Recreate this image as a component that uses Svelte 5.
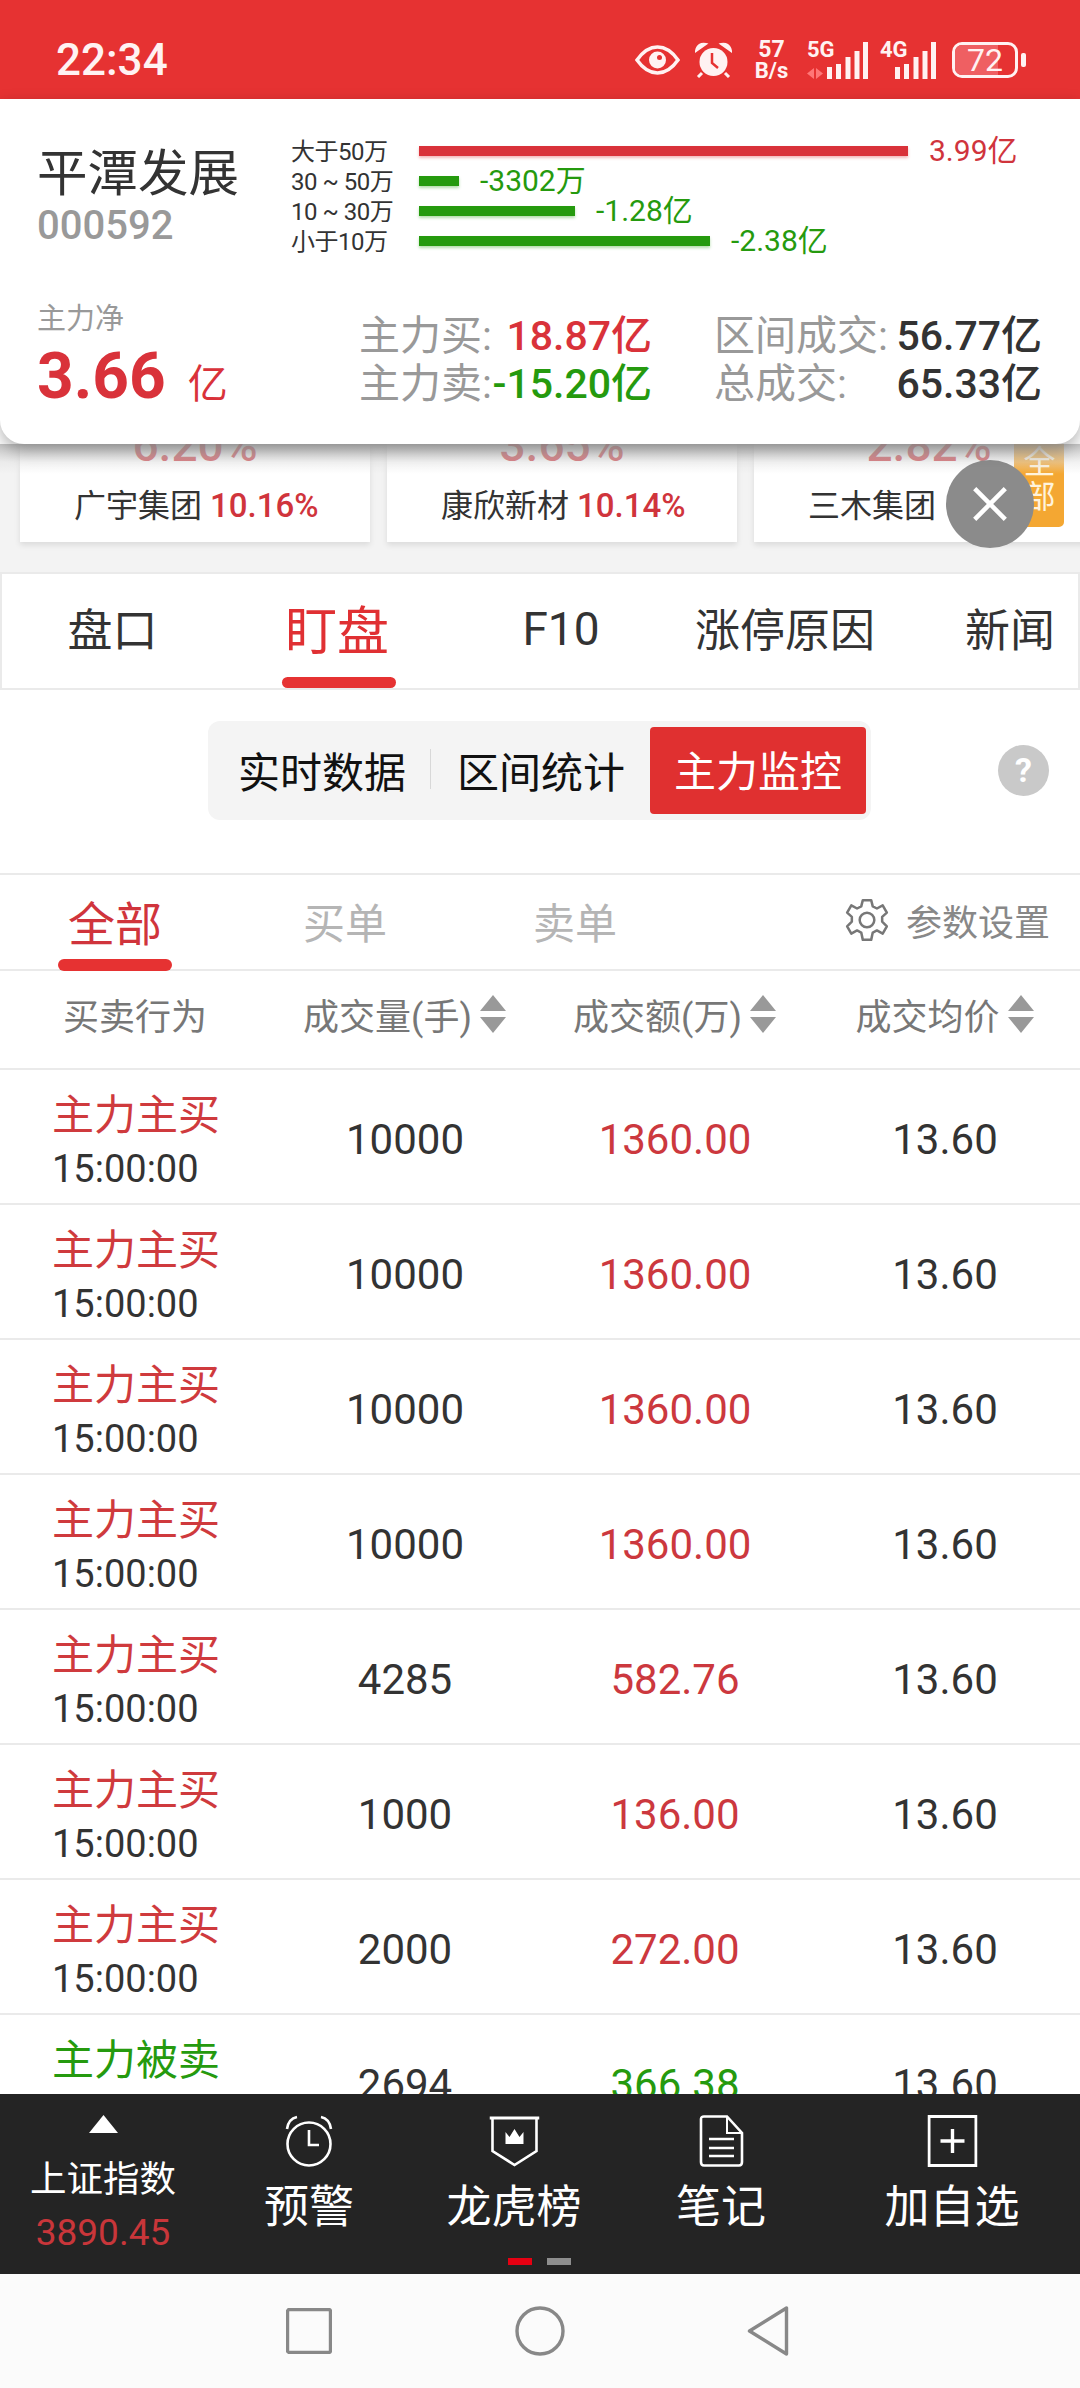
<script>
  const splits = [
    { label: '大于50万', width: 489, value: '3.99亿', up: true },
    { label: '30 ~ 50万', width: 40, value: '-3302万', up: false },
    { label: '10 ~ 30万', width: 156, value: '-1.28亿', up: false },
    { label: '小于10万', width: 291, value: '-2.38亿', up: false }
  ];
  const picks = [
    { pct: '6.20%', name: '广宇集团', rise: '10.16%' },
    { pct: '3.65%', name: '康欣新材', rise: '10.14%' },
    { pct: '2.82%', name: '三木集团', rise: '' }
  ];
  const tabs = [
    { label: '盘口', w: 221 },
    { label: '盯盘', w: 228, on: true },
    { label: 'F10', w: 220 },
    { label: '涨停原因', w: 228 },
    { label: '新闻', w: 222 }
  ];
  const cols = ['成交量(手)', '成交额(万)', '成交均价'];
  const rows = [
    ['主力主买', '10000', '1360.00'],
    ['主力主买', '10000', '1360.00'],
    ['主力主买', '10000', '1360.00'],
    ['主力主买', '10000', '1360.00'],
    ['主力主买', '4285', '582.76'],
    ['主力主买', '1000', '136.00'],
    ['主力主买', '2000', '272.00'],
    ['主力被卖', '2694', '366.38']
  ];
</script>

<div class="screen">
  <header class="status">
    <span class="clock">22:34</span>
    <div class="sys">
      <svg class="eye" viewBox="0 0 45 30" width="45" height="30">
        <path d="M2 15C9 5 15 2 22.500 2S36 5 43 15C36 25 30 28 22.500 28S9 25 2 15Z" fill="none" stroke="#fff2f2" stroke-width="3.500" />
        <circle cx="22.500" cy="15" r="8.500" fill="#fff2f2" />
        <circle cx="24.500" cy="12.500" r="2.500" fill="#e63232" />
      </svg>
      <svg class="alarm" viewBox="0 0 37 36" width="37" height="36">
        <circle cx="18.500" cy="20" r="14" fill="#fff2f2" />
        <path d="M1 9C2 3 6 1 11 2ZM36 9C35 3 31 1 26 2Z" fill="#fff2f2" stroke="#fff2f2" stroke-width="2" />
        <path d="M7 31L3 35M30 31L34 35" stroke="#fff2f2" stroke-width="3" />
        <path d="M17 11V21L23 26" fill="none" stroke="#e63232" stroke-width="2.500" />
      </svg>
      <div class="speed"><span>57</span><span class="unit">B/s</span></div>
      <div class="net">
        <span class="gen">5G</span>
        <svg viewBox="0 0 61 37" width="61" height="37">
          <path d="M0 31.500L7 26V37ZM16 31.500L9 26V37Z" fill="#f77" />
          <path d="M20 25h5v12h-5ZM29 22h5v15h-5ZM38.500 15h5v22h-5ZM47.500 9h5v28h-5ZM56 0h5v37h-5Z" fill="#fff2f2" />
        </svg>
      </div>
      <div class="net">
        <span class="gen">4G</span>
        <svg viewBox="0 0 56 37" width="56" height="37">
          <path d="M15 25h5v12h-5ZM24 22h5v15h-5ZM33.500 15h5v22h-5ZM42.500 9h5v28h-5ZM51 0h5v37h-5Z" fill="#fff2f2" />
        </svg>
      </div>
      <div class="battery">
        <div class="cell"><div class="level"></div><span>72</span></div>
        <div class="tip"></div>
      </div>
    </div>
  </header>

  <section class="summary">
    <div class="top">
      <div class="stock">
        <div class="name">平潭发展</div>
        <div class="code">000592</div>
      </div>
      <div class="splits">
        {#each splits as s}
          <div class="split">
            <span class="lab">{s.label}</span>
            <span class="bar" class:up={s.up} style="width: {s.width}px"></span>
            <span class="val" class:up={s.up}>{s.value}</span>
          </div>
        {/each}
      </div>
    </div>
    <div class="bottom">
      <div class="net-flow">
        <div class="nlabel">主力净</div>
        <div class="nvalue">3.66<em>亿</em></div>
      </div>
      <div class="money">
        <div class="mrow"><span class="mk">主力买:</span><b class="red">18.87亿</b></div>
        <div class="mrow"><span class="mk">主力卖:</span><b class="green">-15.20亿</b></div>
      </div>
      <div class="money wide">
        <div class="mrow"><span class="mk">区间成交:</span><b>56.77亿</b></div>
        <div class="mrow"><span class="mk">总成交:</span><b>65.33亿</b></div>
      </div>
    </div>
  </section>

  <div class="picks">
    {#each picks as p}
      <div class="pick">
        <div class="pct">{p.pct}</div>
        <div class="pname">{p.name} <span>{p.rise}</span></div>
      </div>
    {/each}
    <div class="all">全<br />部</div>
    <div class="close">
      <svg viewBox="0 0 40 40" width="36" height="36"><path d="M3 3L37 37M37 3L3 37" stroke="#fff" stroke-width="5" /></svg>
    </div>
  </div>

  <nav class="tabs">
    {#each tabs as t}
      <div class="tab" class:on={t.on} style="flex-basis: {t.w}px">
        <span>{t.label}</span>
      </div>
    {/each}
  </nav>

  <div class="seg-row">
    <div class="seg">
      <span class="seg-item">实时数据</span>
      <i></i>
      <span class="seg-item">区间统计</span>
      <span class="seg-item active">主力监控</span>
    </div>
    <div class="help">?</div>
  </div>

  <div class="subtabs">
    <div class="sub on"><span>全部</span></div>
    <div class="sub"><span>买单</span></div>
    <div class="sub"><span>卖单</span></div>
    <div class="setting">
      <svg viewBox="0 0 44 44" width="46" height="46">
        <path d="M18 3h8l1.500 6 4 2 5.500-3 4 7-4.500 4v4.500L41 28l-4 7-5.500-3-4 2L26 41h-8l-1.500-7-4-2L7 35l-4-7 4.500-4.500V19L3 15l4-7 5.500 3 4-2Z" fill="none" stroke="#777" stroke-width="2.400" stroke-linejoin="round" />
        <circle cx="22" cy="22" r="7" fill="none" stroke="#777" stroke-width="2.400" />
      </svg>
      <span>参数设置</span>
    </div>
  </div>

  <div class="thead">
    <div class="th">买卖行为</div>
    {#each cols as c}
      <div class="th">
        {c}
        <svg viewBox="0 0 28 40" width="28" height="40"><path d="M14 1L27 17H1ZM14 39L1 23H27Z" fill="#999" /></svg>
      </div>
    {/each}
  </div>

  <div class="tbody">
    {#each rows as r}
      <div class="row">
        <div class="act">
          <div class="kind" class:sell={r[0] === '主力被卖'}>{r[0]}</div>
          <div class="time">15:00:00</div>
        </div>
        <div class="cell-n">{r[1]}</div>
        <div class="cell-n amt" class:sell={r[0] === '主力被卖'}>{r[2]}</div>
        <div class="cell-n">13.60</div>
      </div>
    {/each}
  </div>

  <footer class="dock">
    <div class="index">
      <svg viewBox="0 0 29 18" width="29" height="18"><path d="M14.500 0L29 18H0Z" fill="#fff" /></svg>
      <div class="iname">上证指数</div>
      <div class="ival">3890.45</div>
    </div>
    <div class="act-btn b1">
      <svg viewBox="0 0 50 52" width="50" height="52">
        <circle cx="25" cy="29" r="21.500" fill="none" stroke="#fff" stroke-width="2.600" />
        <path d="M25 15V30H35" fill="none" stroke="#fff" stroke-width="2.600" />
        <path d="M3 14C4 7 8 3 13 2M47 14C46 7 42 3 37 2" fill="none" stroke="#fff" stroke-width="2.600" />
      </svg>
      <span>预警</span>
    </div>
    <div class="act-btn b2">
      <svg viewBox="0 0 50 52" width="50" height="52">
        <path d="M0 3H50" stroke="#fff" stroke-width="3" />
        <path d="M3 3V36L25 50L47 36V3" fill="none" stroke="#fff" stroke-width="2.600" />
        <path d="M16 29V17L20 22L25 14L30 22L34 17V29Z" fill="#fff" />
      </svg>
      <span>龙虎榜</span>
    </div>
    <div class="act-btn b3">
      <svg viewBox="0 0 46 52" width="46" height="52">
        <path d="M3 4Q3 1.500 6 1.500H29L44 18V47Q44 50.500 41 50.500H6Q3 50.500 3 47Z" fill="none" stroke="#fff" stroke-width="2.600" />
        <path d="M29 2V18H44" fill="none" stroke="#fff" stroke-width="2" />
        <path d="M11 24H36M11 33H36M11 41H36" stroke="#fff" stroke-width="2.600" />
      </svg>
      <span>笔记</span>
    </div>
    <div class="act-btn b4">
      <svg viewBox="0 0 50 52" width="50" height="52">
        <rect x="1.500" y="1.500" width="47" height="49" fill="none" stroke="#fff" stroke-width="3" />
        <path d="M25 14V38M13 26H37" stroke="#fff" stroke-width="3.400" />
      </svg>
      <span>加自选</span>
    </div>
    <div class="dots"><i class="cur"></i><i></i></div>
  </footer>

  <div class="navbar">
    <svg viewBox="0 0 46 46" width="46" height="46"><rect x="1.500" y="1.500" width="43" height="43" rx="2" fill="none" stroke="#888" stroke-width="3.400" /></svg>
    <svg viewBox="0 0 50 50" width="50" height="50"><circle cx="25" cy="25" r="23" fill="none" stroke="#888" stroke-width="3.400" /></svg>
    <svg viewBox="0 0 42 50" width="44" height="50"><path d="M39.500 2V48L2.500 25Z" fill="none" stroke="#888" stroke-width="3.400" stroke-linejoin="round" /></svg>
  </div>
</div>

<style>
  :global(body) {
    margin: 0;
    background: #fff;
  }

  .screen {
    width: 1080px;
    height: 2388px;
    overflow: hidden;
    position: relative;
    display: flex;
    flex-direction: column;
    font-family: Roboto, "Noto Sans CJK SC", sans-serif;
    color: #333;
  }

  /* status bar */
  .status {
    flex: none;
    height: 99px;
    box-sizing: border-box;
    background: #e63232;
    display: flex;
    align-items: center;
    justify-content: space-between;
    padding: 21px 54px 0 56px;
    color: #fff2f2;
  }
  .clock {
    font-size: 44px;
    font-weight: 500;
  }
  .sys {
    display: flex;
    align-items: center;
  }
  .eye { margin-right: 15px; }
  .alarm { margin-right: 20px; }
  .speed {
    display: flex;
    flex-direction: column;
    align-items: center;
    width: 39px;
    font-size: 23px;
    font-weight: 700;
    line-height: 21px;
    margin-right: 16px;
    white-space: nowrap;
  }
  .unit { font-size: 22px; }
  .net {
    position: relative;
    display: flex;
    margin-right: 12px;
  }
  .gen {
    position: absolute;
    left: 0;
    top: -2px;
    font-size: 22px;
    font-weight: 700;
    line-height: 20px;
  }
  .battery {
    display: flex;
    align-items: center;
    gap: 3px;
    margin-left: 4px;
  }
  .cell {
    position: relative;
    width: 66px;
    height: 36px;
    box-sizing: border-box;
    border: 3px solid #fff2f2;
    border-radius: 10px;
    text-align: center;
    font-size: 32px;
    line-height: 30px;
    overflow: hidden;
  }
  .cell span { position: relative; }
  .level {
    position: absolute;
    left: 0;
    top: 0;
    bottom: 0;
    width: 72%;
    background: #ef5f62;
  }
  .tip {
    width: 5px;
    height: 14px;
    border-radius: 2px;
    background: #fff2f2;
  }

  /* floating summary */
  .summary {
    flex: none;
    position: relative;
    z-index: 3;
    height: 345px;
    box-sizing: border-box;
    padding: 38px 24px 0 37px;
    background: #fff;
    border-radius: 0 0 24px 24px;
    box-shadow: 0 6px 16px rgba(0, 0, 0, 0.3);
  }
  .top {
    display: flex;
    height: 125px;
  }
  .stock {
    width: 254px;
    padding-top: 8px;
  }
  .name {
    font-size: 50.500px;
    line-height: 58px;
    color: #333;
  }
  .code {
    margin-top: 1px;
    font-size: 40px;
    line-height: 44px;
    font-weight: 500;
    color: #999;
  }
  .splits {
    display: flex;
    flex-direction: column;
    margin-top: -1px;
  }
  .split {
    display: flex;
    align-items: center;
    height: 30px;
  }
  .lab {
    width: 128px;
    margin-bottom: 4px;
    font-size: 24px;
    color: #333;
    white-space: nowrap;
    letter-spacing: -0.500px;
  }
  .bar {
    height: 10px;
    background: #259a0e;
    box-shadow: 0 2px 3px rgba(37, 154, 14, 0.35);
  }
  .bar.up {
    background: #d9323a;
    box-shadow: 0 2px 3px rgba(217, 50, 58, 0.35);
  }
  .val {
    margin-left: 21px;
    margin-bottom: 7px;
    font-size: 30px;
    color: #259a0e;
    white-space: nowrap;
  }
  .val.up { color: #d0343c; }
  .bottom {
    display: flex;
    margin-top: 42px;
  }
  .net-flow { width: 322px; }
  .nlabel {
    margin-top: -3px;
    font-size: 29px;
    line-height: 36px;
    color: #999;
  }
  .nvalue {
    margin-top: 4px;
    font-size: 64px;
    line-height: 72px;
    font-weight: 700;
    color: #d9323a;
  }
  .nvalue em {
    margin-left: 22px;
    font-size: 40px;
    font-style: normal;
    font-weight: 400;
  }
  .money {
    width: 293px;
    margin-right: 62px;
    padding-top: 4px;
  }
  .money.wide {
    width: 328px;
    margin-right: 0;
  }
  .mrow {
    display: flex;
    align-items: center;
    justify-content: space-between;
    height: 48px;
    font-size: 41px;
    white-space: nowrap;
  }
  .mk { color: #999; }
  .mrow b {
    font-weight: 500;
    color: #333;
  }
  .mrow b.red { color: #d9323a; }
  .mrow b.green { color: #259a0e; }

  /* half hidden strip under the summary */
  .picks {
    flex: none;
    position: relative;
    height: 128px;
    box-sizing: border-box;
    padding: 0 0 0 20px;
    background: #f3f3f3;
    display: flex;
    gap: 17px;
    overflow: visible;
  }
  .picks::before {
    content: "";
    position: absolute;
    left: 0;
    right: 0;
    top: 0;
    height: 30px;
    z-index: 2;
    background: linear-gradient(rgba(190, 190, 190, 0.85), rgba(225, 225, 225, 0.45) 60%, rgba(240, 240, 240, 0));
  }
  .pick {
    flex: none;
    width: 350px;
    height: 98px;
    background: #fff;
    box-shadow: 0 3px 6px rgba(0, 0, 0, 0.1);
    text-align: center;
    overflow: hidden;
  }
  .pct {
    margin-top: -22px;
    height: 46px;
    font-size: 46px;
    line-height: 46px;
    font-weight: 500;
    color: #d0343c;
  }
  .pname {
    margin-top: 16px;
    padding-left: 54px;
    font-size: 32px;
    line-height: 44px;
    color: #333;
    text-align: left;
    white-space: nowrap;
  }
  .pname span {
    font-size: 33px;
    color: #d0343c;
    font-weight: 500;
  }
  .all {
    position: absolute;
    left: 1014px;
    top: 0;
    width: 50px;
    height: 83px;
    box-sizing: border-box;
    padding: 1px 0 0 1px;
    background: #f4a732;
    border-radius: 0 0 5px 5px;
    color: #fff3dc;
    font-size: 32px;
    line-height: 35px;
    text-align: center;
  }
  .close {
    position: absolute;
    z-index: 2;
    left: 946px;
    top: 16px;
    width: 88px;
    height: 88px;
    border-radius: 50%;
    background: #8b8b8b;
    display: flex;
    align-items: center;
    justify-content: center;
  }

  /* main tabs */
  .tabs {
    flex: none;
    height: 118px;
    box-sizing: border-box;
    border: 2px solid #eaeaea;
    display: flex;
    overflow: hidden;
    background: #fff;
  }
  .tab {
    flex: none;
    display: flex;
    align-items: center;
    justify-content: center;
    font-size: 45px;
    color: #333;
    position: relative;
    padding-bottom: 8px;
    box-sizing: border-box;
  }
  .tab:nth-child(3) span {
    font-size: 46px;
    padding-top: 3px;
  }
  .tab.on {
    color: #e03033;
    font-size: 52px;
  }
  .tab.on::after {
    content: "";
    position: absolute;
    bottom: 0;
    left: 59px;
    width: 114px;
    height: 11px;
    border-radius: 6px;
    background: #e63232;
  }

  .seg-row {
    flex: none;
    height: 183px;
    position: relative;
    padding-top: 31px;
    box-sizing: border-box;
  }
  .seg {
    margin-left: 208px;
    width: 663px;
    height: 99px;
    box-sizing: border-box;
    padding: 6px 5px 9px 30px;
    border-radius: 12px;
    background: #f4f4f4;
    display: flex;
    align-items: center;
  }
  .seg-item {
    font-size: 42px;
    color: #111;
  }
  .seg i {
    width: 1px;
    height: 40px;
    margin: 0 26px 0 24px;
    background: #d8d8d8;
  }
  .seg-item.active {
    margin-left: 25px;
    margin-top: 3px;
    width: 216px;
    height: 87px;
    line-height: 91px;
    text-align: center;
    background: #e03030;
    border-radius: 4px;
    color: #fff;
  }
  .help {
    position: absolute;
    left: 998px;
    top: 55px;
    width: 51px;
    height: 51px;
    border-radius: 50%;
    background: #c9c9c9;
    color: #fff;
    font-size: 34px;
    font-weight: 700;
    line-height: 51px;
    text-align: center;
  }

  .subtabs {
    flex: none;
    height: 98px;
    box-sizing: border-box;
    border-top: 2px solid #eaeaea;
    border-bottom: 2px solid #eaeaea;
    display: flex;
    align-items: center;
    position: relative;
  }
  .sub {
    width: 230px;
    height: 100%;
    box-sizing: border-box;
    padding-bottom: 4px;
    display: flex;
    align-items: center;
    justify-content: center;
    font-size: 42px;
    color: #b5b5b5;
    position: relative;
  }
  .sub.on {
    font-size: 47px;
    color: #d0343c;
  }
  .sub.on::after {
    content: "";
    position: absolute;
    bottom: -2px;
    left: 58px;
    width: 114px;
    height: 12px;
    border-radius: 6px;
    background: #e63232;
  }
  .setting {
    margin-left: auto;
    margin-right: 30px;
    padding-bottom: 4px;
    display: flex;
    align-items: center;
    gap: 16px;
    font-size: 36px;
    color: #888;
  }

  .thead {
    flex: none;
    height: 99px;
    box-sizing: border-box;
    padding-bottom: 12px;
    border-bottom: 2px solid #eaeaea;
    display: grid;
    grid-template-columns: repeat(4, 1fr);
  }
  .th {
    display: flex;
    align-items: center;
    justify-content: center;
    gap: 7px;
    font-size: 36px;
    color: #777;
    white-space: nowrap;
  }

  .row {
    height: 135px;
    box-sizing: border-box;
    padding-top: 6px;
    border-bottom: 2px solid #eaeaea;
    display: grid;
    grid-template-columns: repeat(4, 1fr);
    align-items: center;
  }
  .act {
    padding-left: 52px;
    padding-top: 5px;
  }
  .kind {
    font-size: 42px;
    line-height: 50px;
    color: #cf3a3d;
  }
  .kind.sell { color: #259a0e; }
  .time {
    font-size: 38px;
    line-height: 50px;
    color: #333;
    margin-top: 3px;
  }
  .cell-n {
    text-align: center;
    font-size: 42px;
    color: #333;
  }
  .amt { color: #cc383e; }
  .amt.sell { color: #259a0e; }

  /* bottom dock */
  .dock {
    position: absolute;
    left: 0;
    right: 0;
    top: 2094px;
    height: 180px;
    background: #242424;
    color: #fff;
  }
  .index {
    position: absolute;
    left: 0;
    top: 21px;
    width: 206px;
    display: flex;
    flex-direction: column;
    align-items: center;
  }
  .iname {
    margin-top: 25px;
    font-size: 36.500px;
    line-height: 44px;
  }
  .ival {
    margin-top: 9px;
    font-size: 37px;
    line-height: 44px;
    color: #c9363a;
  }
  .act-btn {
    position: absolute;
    top: 21px;
    transform: translateX(-50%);
    display: flex;
    flex-direction: column;
    align-items: center;
    font-size: 45px;
    line-height: 56px;
    white-space: nowrap;
  }
  .act-btn svg { margin-bottom: 13px; }
  .b1 { left: 309px; }
  .b2 { left: 514px; }
  .b3 { left: 721px; }
  .b4 { left: 952px; }
  .dots {
    position: absolute;
    left: 508px;
    top: 164px;
    display: flex;
    gap: 15px;
  }
  .dots i {
    width: 24px;
    height: 7px;
    background: #8e8e8e;
  }
  .dots i.cur { background: #e60012; }

  .navbar {
    position: absolute;
    left: 0;
    right: 0;
    top: 2274px;
    height: 114px;
    background: #fbfbfb;
    display: flex;
    align-items: center;
    padding-left: 286px;
    gap: 0;
  }
  .navbar svg:nth-child(2) { margin-left: 183px; }
  .navbar svg:nth-child(3) { margin-left: 181px; }
</style>
